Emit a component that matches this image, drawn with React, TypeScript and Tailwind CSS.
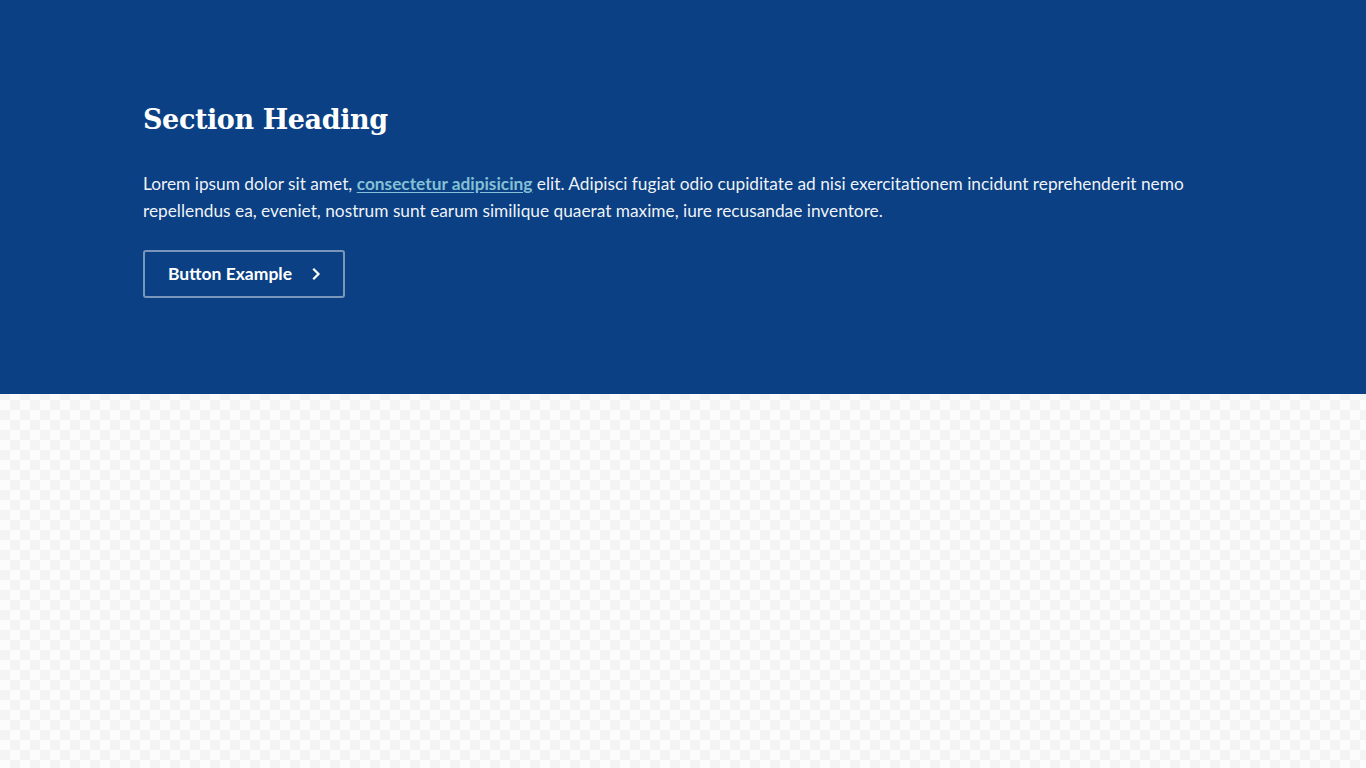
import React from 'react';

const ChevronRight: React.FC<{ className?: string }> = ({ className }) => (
    <svg viewBox="0 0 16 16" className={className} fill="none" stroke="currentColor" strokeWidth={2.2} strokeLinecap="square">
        <path d="M6 3.5 10.5 8 6 12.5" />
    </svg>
);

const App: React.FC = () => {
    return (
        <div className="min-h-screen bg-[repeating-conic-gradient(#f4f4f4_0_25%,#fcfcfc_0_50%)] bg-[length:20px_20px]">
            <section className="bg-[#0b4184] h-[394px] pt-[100px] text-white">
                <div className="max-w-[1080px] mx-auto">
                    <h2 className="font-['DejaVu_Serif',serif] font-bold text-[27px] leading-[40px] tracking-[-0.4px]">
                        Section Heading
                    </h2>
                    <p className="mt-[30px] font-['Lato',sans-serif] text-[17.3px] leading-[27px] text-white/95">
                        Lorem ipsum dolor sit amet,{' '}
                        <a href="#" className="font-bold text-[#84c0d6] underline underline-offset-2">
                            consectetur adipisicing
                        </a>{' '}
                        elit. Adipisci fugiat odio cupiditate ad nisi exercitationem incidunt reprehenderit nemo repellendus ea, eveniet, nostrum sunt earum similique quaerat maxime, iure recusandae inventore.
                    </p>
                    <button className="mt-[26px] h-[48px] w-[202px] flex items-center justify-between pl-[23px] pr-[19px] border-2 border-white/45 rounded-[3px] font-['Lato',sans-serif] font-bold text-[17.5px]">
                        <span>Button Example</span>
                        <ChevronRight className="w-4 h-4" />
                    </button>
                </div>
            </section>
        </div>
    );
};

export default App;
